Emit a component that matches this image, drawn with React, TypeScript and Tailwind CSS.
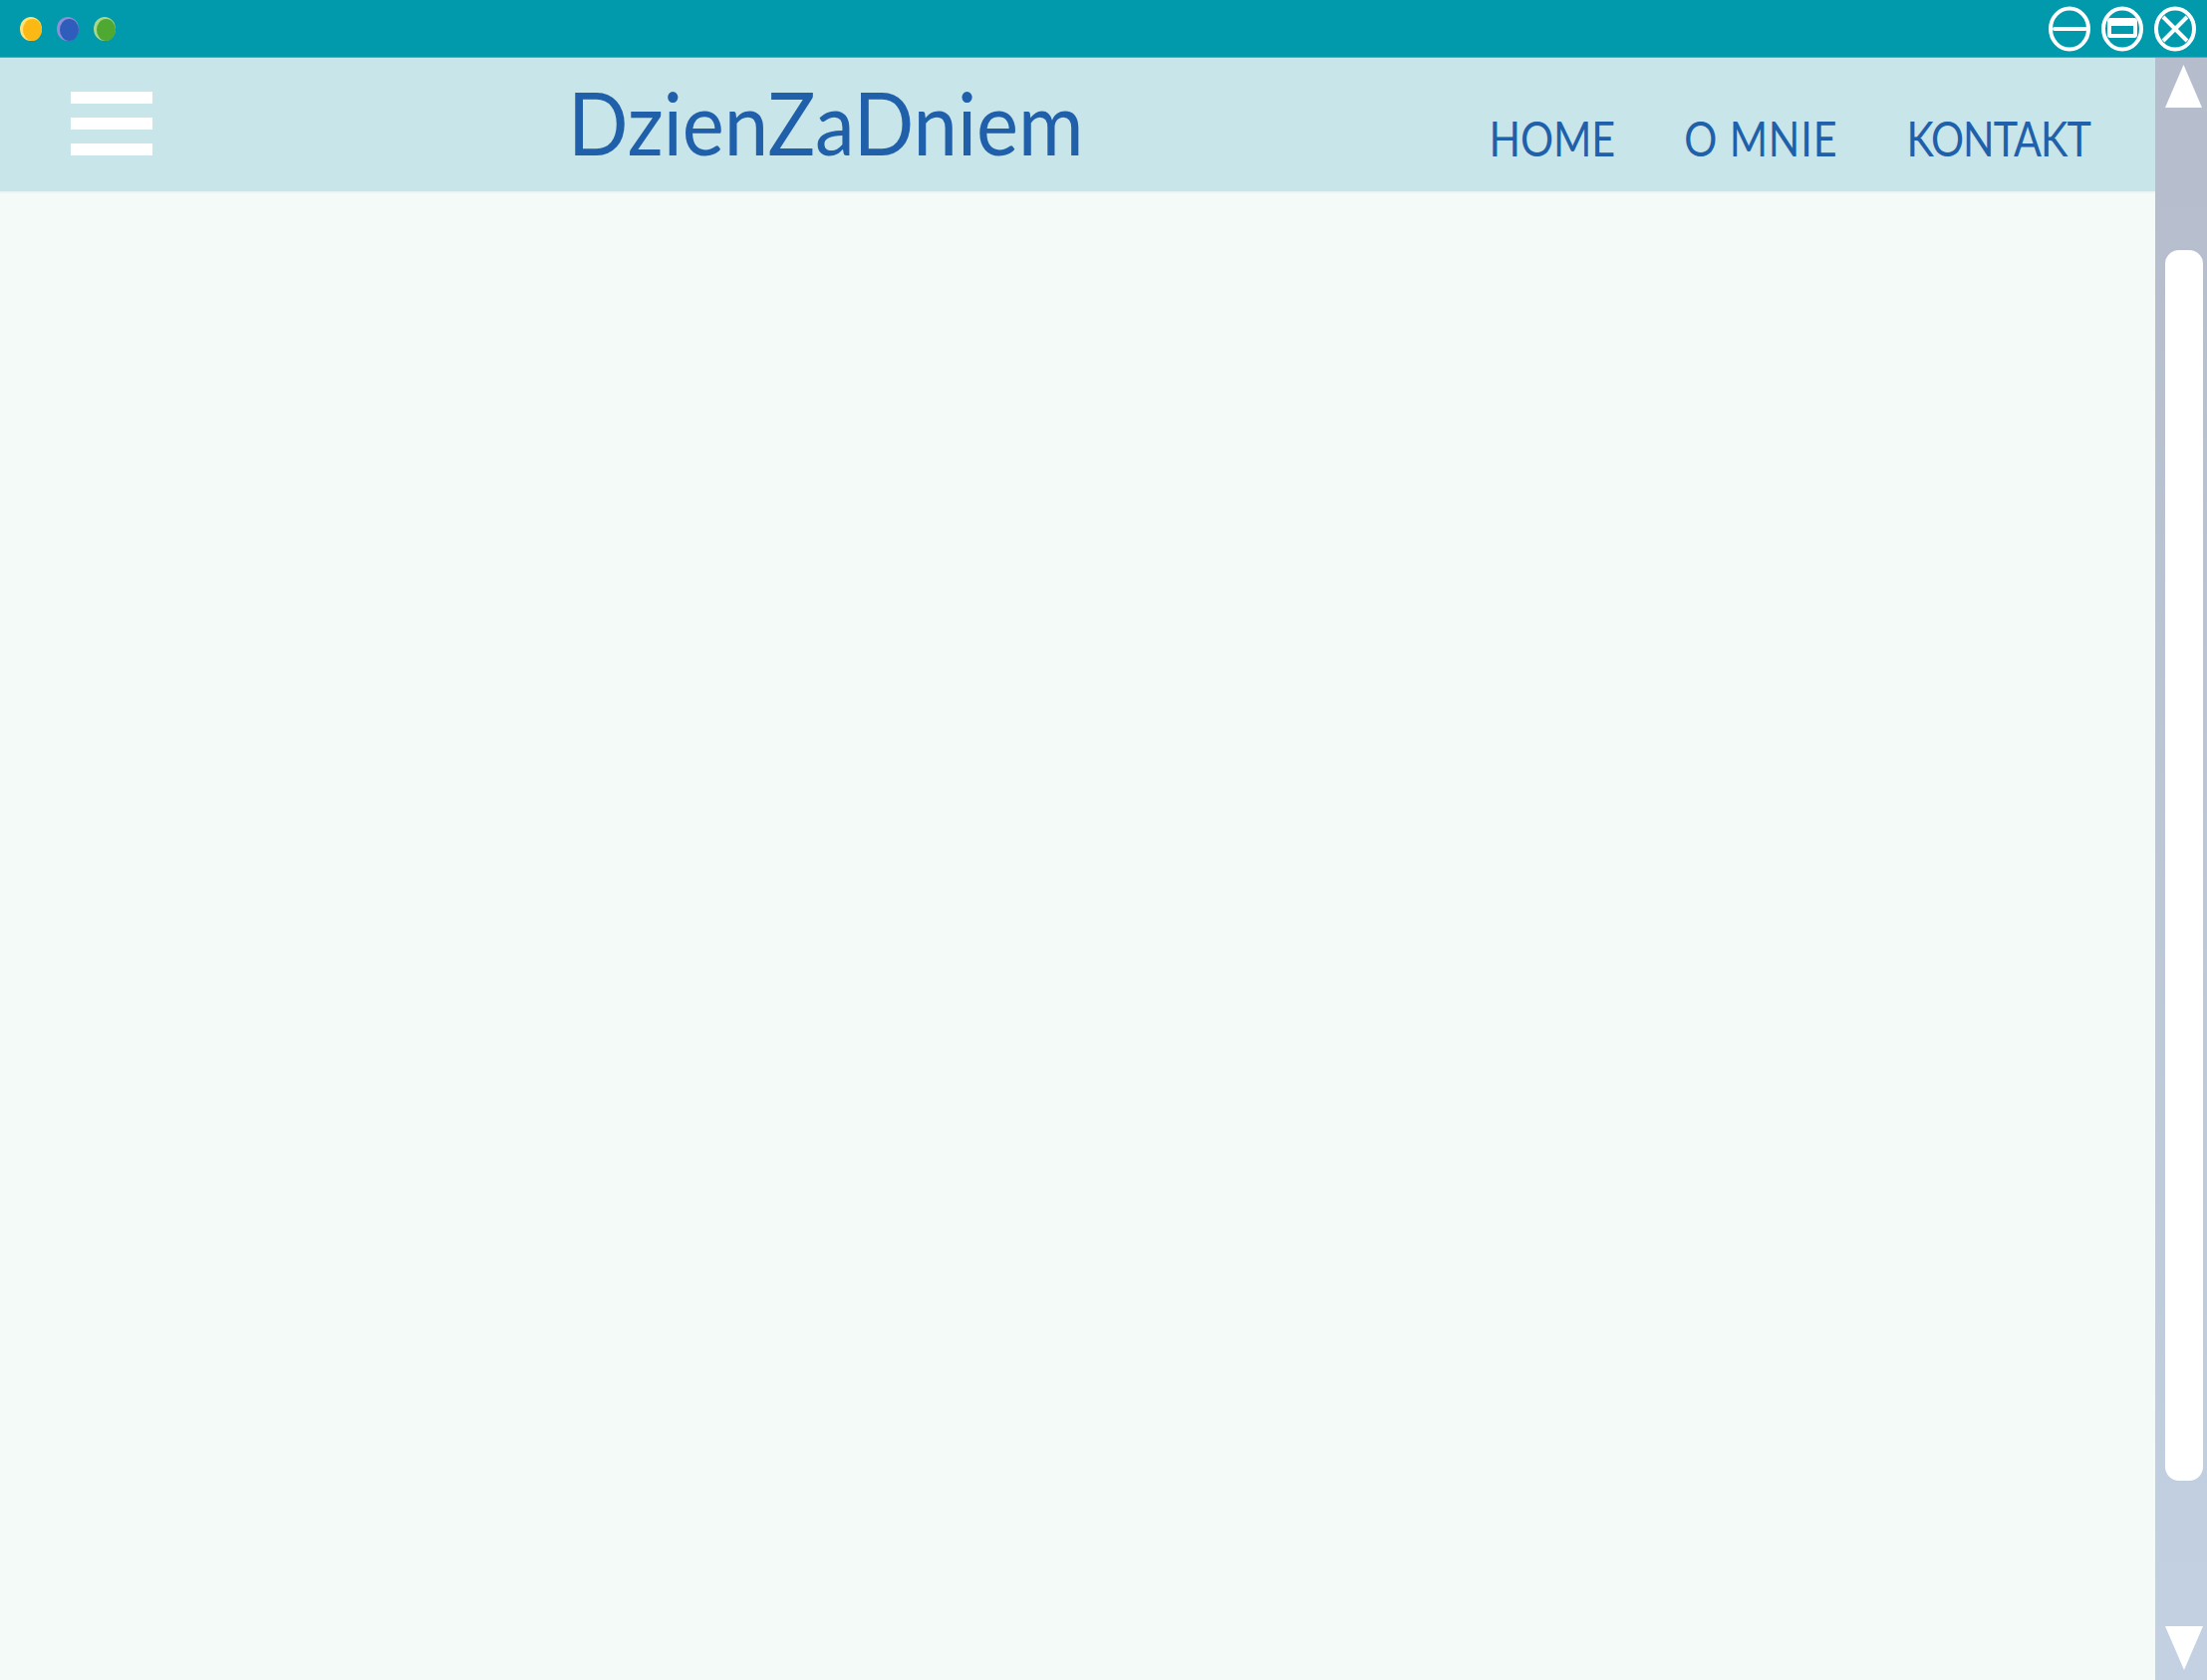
import React from "react";

const WindowControls = () => (
  <div className="flex items-center gap-[11px]">
    <svg width="42" height="46" viewBox="0 0 42 46" fill="none" stroke="white" strokeWidth="4">
      <ellipse cx="21" cy="23" rx="19" ry="20.5" />
      <path d="M6 23h31" strokeWidth="4" strokeLinecap="round" />
    </svg>
    <svg width="42" height="46" viewBox="0 0 42 46" fill="none" stroke="white" strokeWidth="4">
      <ellipse cx="21" cy="23" rx="19" ry="20.5" />
      <path
        d="M9 12h24a3 3 0 0 1 3 3v14a3 3 0 0 1-3 3H9a3 3 0 0 1-3-3V15a3 3 0 0 1 3-3zM10 20v8h22v-8z"
        fill="white"
        fillRule="evenodd"
        stroke="none"
      />
    </svg>
    <svg width="42" height="46" viewBox="0 0 42 46" fill="none" stroke="white" strokeWidth="4">
      <ellipse cx="21" cy="23" rx="19" ry="20.5" />
      <path d="M9 11l24 24M33 11L9 35" />
    </svg>
  </div>
);

const Dot = ({ base, light }: { base: string; light: string }) => (
  <svg width="22" height="24" viewBox="0 0 22 24">
    <ellipse cx="11" cy="12" rx="11" ry="12" fill={light} />
    <ellipse cx="12.5" cy="13" rx="9.5" ry="11" fill={base} />
  </svg>
);

const App = () => {
  return (
    <div className="flex h-[1686px] w-[2215px] flex-col overflow-hidden bg-[#f4faf8] font-['Lato',sans-serif]">
      <div className="flex h-[58px] items-center justify-between border-b border-b-[#3fb0bf] bg-[#019aad] pr-[11px] pl-[20px]">
        <div className="flex items-center gap-[15px]">
          <Dot base="#fdb913" light="#fde27a" />
          <Dot base="#2f5dbb" light="#8f8fd8" />
          <Dot base="#4fa832" light="#a8d888" />
        </div>
        <WindowControls />
      </div>

      <div className="flex min-h-0 flex-1">
        <div className="flex min-w-0 flex-1 flex-col">
          <header className="flex h-[136px] items-start border-b-2 border-b-[#eaf5f5] bg-[#c8e5ea]">
            <div className="mt-[34px] ml-[71px] flex w-[82px] flex-col gap-[14px]">
              <div className="h-[12px] bg-white" />
              <div className="h-[12px] bg-white" />
              <div className="h-[12px] bg-white" />
            </div>
            <h1 className="mt-[15px] ml-[417px] origin-left scale-x-[0.915] text-[87px] leading-[100px] font-normal text-[#2060aa]">
              DzienZaDniem
            </h1>
            <nav className="mt-[50px] mr-[65px] ml-auto flex origin-right scale-x-[0.843] gap-[82px] text-[49px] leading-[60px] font-normal text-[#2060aa]">
              <span>HOME</span>
              <span className="tracking-[1px]">O MNIE</span>
              <span className="tracking-[-1.2px]">KONTAKT</span>
            </nav>
          </header>
          <main className="flex-1" />
        </div>

        <aside className="flex w-[52px] flex-col items-center bg-gradient-to-b from-[#b5bccb] to-[#c3d1e3] pt-[7px] pb-[10px] pl-[5px]">
          <svg width="37" height="43" viewBox="0 0 37 43" className="shrink-0">
            <path d="M18.5 0L37 43H0z" fill="white" />
          </svg>
          <div className="mt-[143px] h-[1235px] w-[38px] shrink-0 rounded-[14px] bg-white" />
          <svg width="38" height="44" viewBox="0 0 38 44" className="mt-auto shrink-0">
            <path d="M0 0h38L19 44z" fill="white" />
          </svg>
        </aside>
      </div>
    </div>
  );
};

export default App;
